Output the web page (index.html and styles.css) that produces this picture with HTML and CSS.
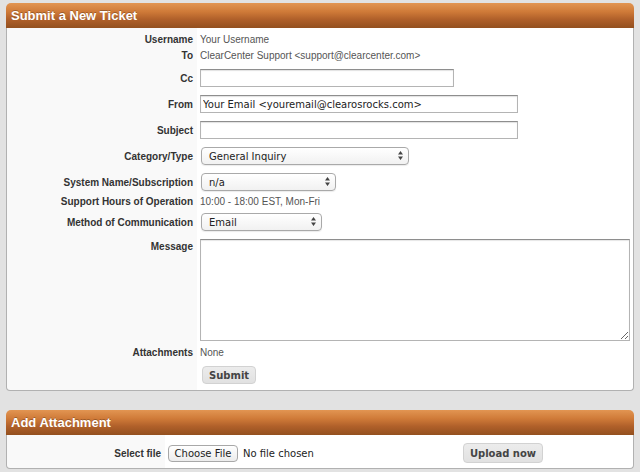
FILE: index.html
```html
<!DOCTYPE html>
<html lang="en">
<head>
    <meta charset="UTF-8">
    <meta name="viewport" content="width=device-width, initial-scale=1.0">
    <title>Submit a New Ticket</title>
    <link rel="stylesheet" href="styles.css">
</head>
<body>
    <div class="panel">
        <div class="panel-head">Submit a New Ticket</div>
        <form class="panel-body ticket" onsubmit="return false;">
            <div class="row text">
                <span class="label">Username</span>
                <span class="value">Your Username</span>
            </div>
            <div class="row text">
                <span class="label">To</span>
                <span class="value">ClearCenter Support &lt;support@clearcenter.com&gt;</span>
            </div>
            <div class="row field first">
                <label class="label" for="cc">Cc</label>
                <span><input type="text" id="cc" class="input input-cc"></span>
            </div>
            <div class="row field">
                <label class="label" for="from">From</label>
                <span><input type="text" id="from" class="input input-wide" value="Your Email <youremail@clearosrocks.com>"></span>
            </div>
            <div class="row field">
                <label class="label" for="subject">Subject</label>
                <span><input type="text" id="subject" class="input input-wide"></span>
            </div>
            <div class="row field">
                <label class="label" for="category">Category/Type</label>
                <span class="select w-cat">
                    <select id="category">
                        <option>General Inquiry</option>
                        <option>Technical Support</option>
                        <option>Billing</option>
                    </select>
                    <svg class="arrows" width="5" height="9" viewBox="0 0 5 9"><path d="M0 3.6 2.5 0 5 3.6Z M0 5.4 5 5.4 2.5 9Z"/></svg>
                </span>
            </div>
            <div class="row field">
                <label class="label" for="system">System Name/Subscription</label>
                <span class="select w-sys">
                    <select id="system">
                        <option>n/a</option>
                    </select>
                    <svg class="arrows" width="5" height="9" viewBox="0 0 5 9"><path d="M0 3.6 2.5 0 5 3.6Z M0 5.4 5 5.4 2.5 9Z"/></svg>
                </span>
            </div>
            <div class="row text short">
                <span class="label">Support Hours of Operation</span>
                <span class="value">10:00 - 18:00 EST, Mon-Fri</span>
            </div>
            <div class="row field">
                <label class="label" for="method">Method of Communication</label>
                <span class="select w-method">
                    <select id="method">
                        <option>Email</option>
                        <option>Phone</option>
                    </select>
                    <svg class="arrows" width="5" height="9" viewBox="0 0 5 9"><path d="M0 3.6 2.5 0 5 3.6Z M0 5.4 5 5.4 2.5 9Z"/></svg>
                </span>
            </div>
            <div class="row field top">
                <label class="label" for="message">Message</label>
                <span><textarea id="message" class="message"></textarea></span>
            </div>
            <div class="row text">
                <span class="label">Attachments</span>
                <span class="value">None</span>
            </div>
            <div class="row submit-row">
                <span class="label"></span>
                <span><button type="submit" class="btn">Submit</button></span>
            </div>
        </form>
    </div>

    <div class="panel second">
        <div class="panel-head">Add Attachment</div>
        <div class="panel-body upload">
            <div class="row upload-row">
                <span class="label">Select file</span>
                <span class="file">
                    <label class="file-btn" for="file">Choose File</label>
                    <span class="file-name">No file chosen</span>
                    <input type="file" id="file" class="file-input">
                </span>
                <button type="button" class="btn btn-upload">Upload now</button>
            </div>
        </div>
    </div>
</body>
</html>
```

FILE: styles.css
```css
body {
    margin: 0;
    padding: 3px 6px 0 6px;
    background-color: #e2e2e2;
    font-family: "Liberation Sans", Arial, sans-serif;
    font-size: 10px;
    color: #333333;
}
.panel {
    width: 628px;
}
.panel.second {
    margin-top: 19px;
}
.panel-head {
    height: 25px;
    line-height: 25px;
    padding-left: 5px;
    border-radius: 5px 5px 0 0;
    background: linear-gradient(#e29552, #cf7a38 35%, #b0602a 65%, #93501f);
    color: #ffffff;
    font-size: 13px;
    font-weight: bold;
    text-shadow: 0 -1px 0 rgba(0, 0, 0, 0.25);
}
.panel-body {
    border: 1px solid #b1b1b1;
    border-top: none;
    border-radius: 0 0 4px 4px;
    background: linear-gradient(to right, #f9f9f9 190px, #ffffff 190px);
}
.ticket {
    padding: 4px 0 0 0;
}
.row {
    display: grid;
    grid-template-columns: 186px 1fr;
    column-gap: 7px;
    align-items: center;
}
.label {
    text-align: right;
    font-weight: bold;
    color: #333333;
}
.value {
    color: #555555;
}
.row.text {
    line-height: 16px;
}
.row.text.short {
    line-height: 14px;
}
.row.field {
    padding: 4px 0;
}
.row.field.first {
    padding-top: 5px;
}
.row.top {
    align-items: start;
}
.row.top .label {
    line-height: 16px;
}
.submit-row {
    padding: 5px 0 6px 0;
}
.input {
    box-sizing: border-box;
    height: 18px;
    margin: 0;
    padding: 0 2px;
    border: 1px solid #b4b4b4;
    border-top-color: #8e8e8e;
    box-shadow: inset 0 1px 1px rgba(0, 0, 0, 0.12);
    font-family: "DejaVu Sans", Verdana, sans-serif;
    font-size: 10px;
    color: #222222;
    display: block;
}
.input-cc {
    width: 254px;
}
.input-wide {
    width: 318px;
}
.select {
    position: relative;
    display: block;
    margin-left: 1px;
    height: 18px;
}
.select select {
    appearance: none;
    -webkit-appearance: none;
    box-sizing: border-box;
    width: 100%;
    height: 18px;
    margin: 0;
    padding: 0 0 0 7px;
    border: 1px solid #a9a9a9;
    border-radius: 4px;
    background: linear-gradient(#ffffff, #f1f1f1);
    box-shadow: 0 1px 1px rgba(0, 0, 0, 0.08);
    font-family: "DejaVu Sans", Verdana, sans-serif;
    font-size: 10px;
    color: #222222;
}
.select .arrows {
    position: absolute;
    right: 6px;
    top: 4px;
    fill: #444444;
    pointer-events: none;
}
.w-cat {
    width: 208px;
}
.w-sys {
    width: 135px;
}
.w-method {
    width: 121px;
}
.message {
    box-sizing: border-box;
    display: block;
    width: 430px;
    height: 102px;
    margin: 0;
    border: 1px solid #b4b4b4;
    border-top-color: #8e8e8e;
    box-shadow: inset 0 1px 1px rgba(0, 0, 0, 0.1);
    resize: both;
    font-family: "DejaVu Sans", Verdana, sans-serif;
    font-size: 10px;
}
.btn {
    box-sizing: border-box;
    height: 18px;
    padding: 0 6px;
    margin: 0 0 0 2px;
    border: 1px solid #d2d2d2;
    border-radius: 4px;
    background: linear-gradient(#ececec, #e1e1e1);
    font-family: "DejaVu Sans", Verdana, sans-serif;
    font-size: 10px;
    font-weight: bold;
    color: #444444;
    white-space: nowrap;
    cursor: pointer;
    display: block;
}
.btn:hover {
    background: #d9d9d9;
}
.upload {
    padding: 8px 0 5px 0;
    background: linear-gradient(to right, #f9f9f9 158px, #ffffff 158px);
}
.upload-row {
    grid-template-columns: 154px 288px auto;
}
.file {
    display: flex;
    align-items: center;
    gap: 5px;
}
.file-btn {
    box-sizing: border-box;
    height: 17px;
    line-height: 15px;
    width: 70px;
    text-align: center;
    border: 1px solid #a8a8a8;
    border-radius: 4px;
    background: linear-gradient(#ffffff, #ececec);
    font-family: "DejaVu Sans", Verdana, sans-serif;
    font-size: 10px;
    color: #222222;
    cursor: pointer;
}
.file-name {
    font-family: "DejaVu Sans", Verdana, sans-serif;
    font-size: 10px;
    color: #222222;
}
.file-input {
    display: none;
}
.btn-upload {
    height: 20px;
    width: 80px;
    padding: 0;
    margin: 0;
}
```
